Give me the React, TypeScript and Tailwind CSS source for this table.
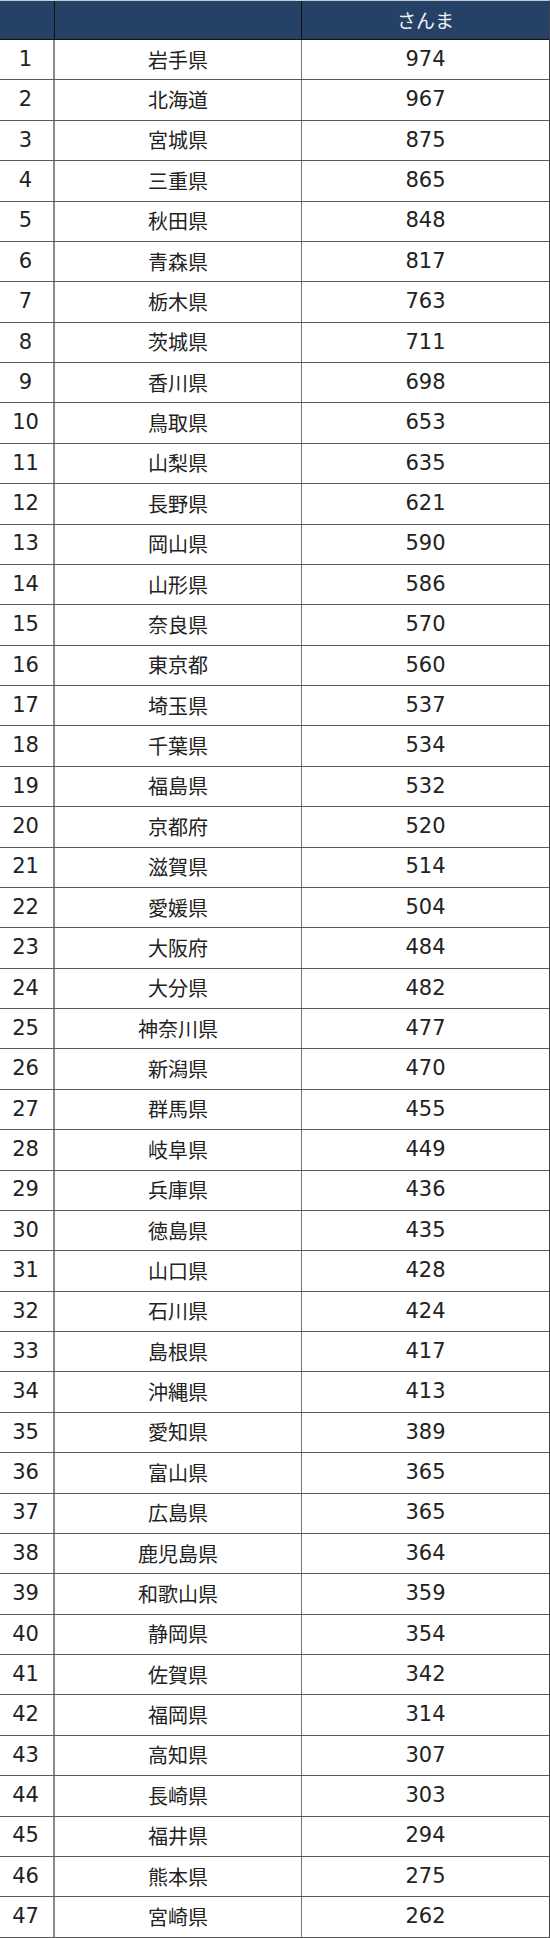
import React from "react";

const data: [string, number][] = [
  ["岩手県", 974], ["北海道", 967], ["宮城県", 875], ["三重県", 865], ["秋田県", 848],
  ["青森県", 817], ["栃木県", 763], ["茨城県", 711], ["香川県", 698], ["鳥取県", 653],
  ["山梨県", 635], ["長野県", 621], ["岡山県", 590], ["山形県", 586], ["奈良県", 570],
  ["東京都", 560], ["埼玉県", 537], ["千葉県", 534], ["福島県", 532], ["京都府", 520],
  ["滋賀県", 514], ["愛媛県", 504], ["大阪府", 484], ["大分県", 482], ["神奈川県", 477],
  ["新潟県", 470], ["群馬県", 455], ["岐阜県", 449], ["兵庫県", 436], ["徳島県", 435],
  ["山口県", 428], ["石川県", 424], ["島根県", 417], ["沖縄県", 413], ["愛知県", 389],
  ["富山県", 365], ["広島県", 365], ["鹿児島県", 364], ["和歌山県", 359], ["静岡県", 354],
  ["佐賀県", 342], ["福岡県", 314], ["高知県", 307], ["長崎県", 303], ["福井県", 294],
  ["熊本県", 275], ["宮崎県", 262],
];

export default function App() {
  return (
    <div
      className="w-[550px] bg-white text-[#222]"
      style={{ fontFamily: '"DejaVu Sans", "Noto Sans CJK JP", sans-serif' }}
    >
      <div className="border-t border-[#c4ccd6] border-r border-r-[#444]">
        <div className="grid grid-cols-[55px_247px_1fr] h-[39px] bg-[#264166] border-b border-[#111]">
          <div className="border-r border-[#111]" />
          <div className="border-r border-[#111]" />
          <div className="flex items-center justify-center text-[19px] text-[#eef2f7]" style={{ fontFamily: '"Noto Sans CJK JP", sans-serif' }}>
            さんま
          </div>
        </div>
        {data.map(([name, v], i) => (
          <div
            key={i}
            className="grid grid-cols-[55px_247px_1fr] h-[40.38px] border-b border-[#5a5a5a]"
          >
            <div className="flex items-center justify-center border-r-2 border-[#8a8a8a] text-[21px] pr-[2px]">
              {i + 1}
            </div>
            <div
              className="flex items-center justify-center border-r border-[#777] text-[20px]"
              style={{ fontFamily: '"Noto Sans CJK JP", sans-serif' }}
            >
              {name}
            </div>
            <div className="flex items-center justify-center text-[21px]">{v}</div>
          </div>
        ))}
      </div>
    </div>
  );
}
